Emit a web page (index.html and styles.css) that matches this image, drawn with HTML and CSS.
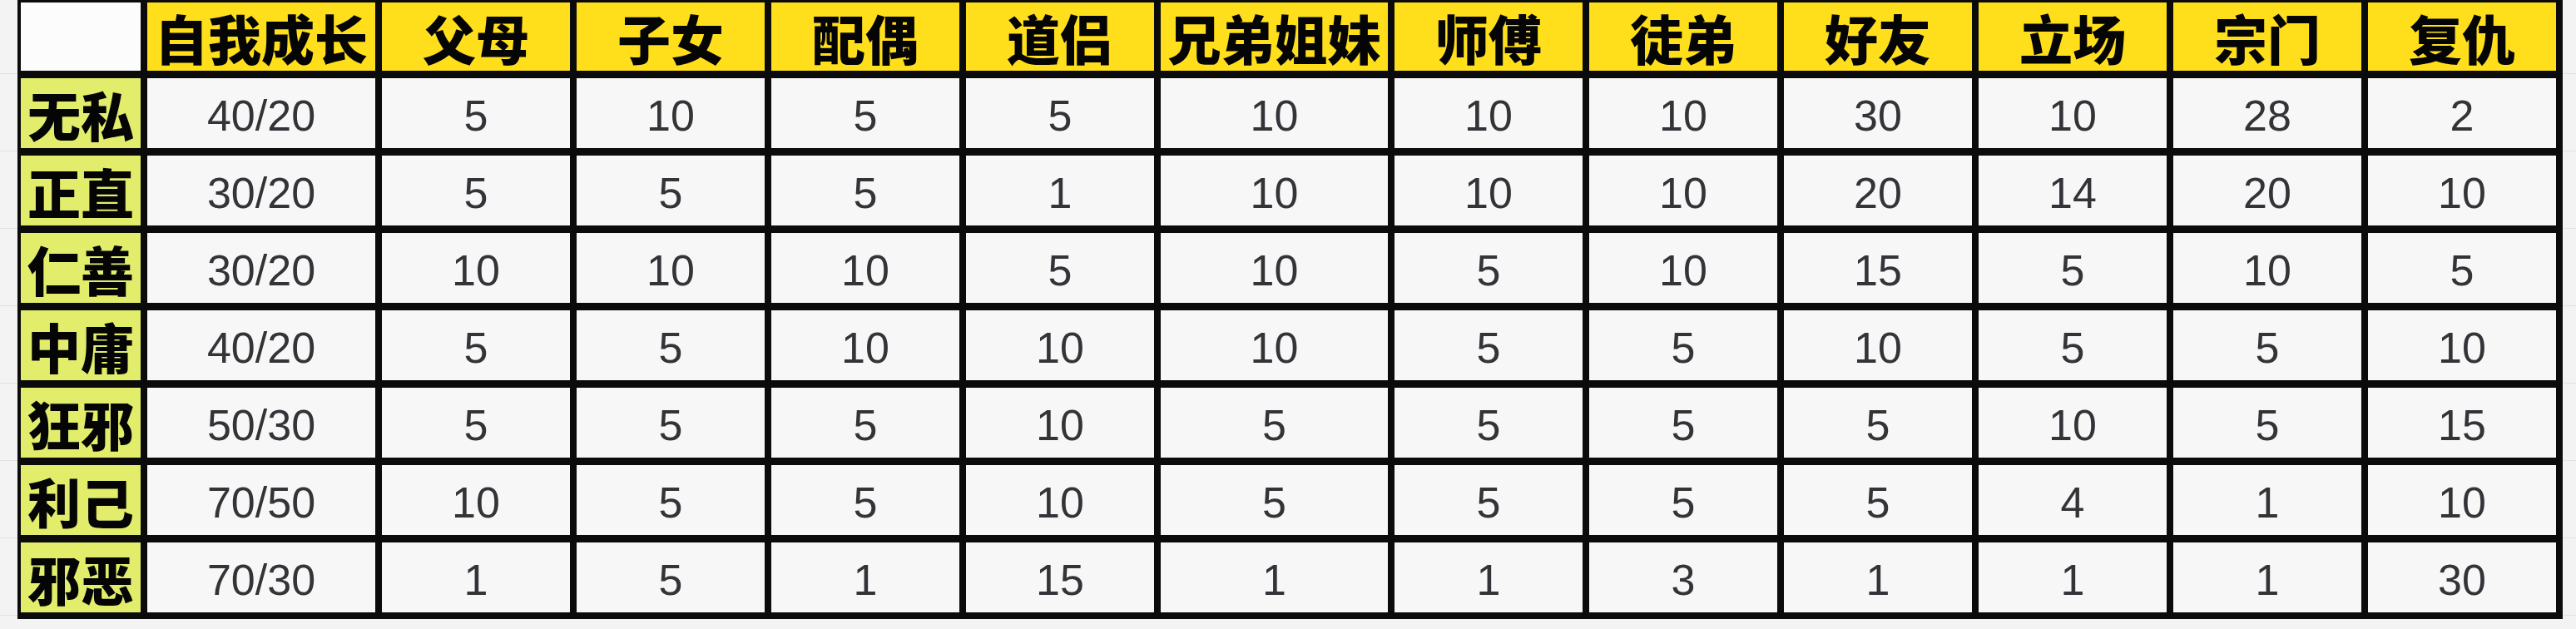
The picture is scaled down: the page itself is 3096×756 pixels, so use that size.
FILE: index.html
```html
<!DOCTYPE html>
<html lang="zh">
<head>
<meta charset="utf-8">
<title>性格关系表</title>
<link rel="stylesheet" href="styles.css">
</head>
<body>
<div class="sheet">
  <div class="corner"></div>
  <div class="col-head">自我成长</div>
  <div class="col-head">父母</div>
  <div class="col-head">子女</div>
  <div class="col-head">配偶</div>
  <div class="col-head">道侣</div>
  <div class="col-head">兄弟姐妹</div>
  <div class="col-head">师傅</div>
  <div class="col-head">徒弟</div>
  <div class="col-head">好友</div>
  <div class="col-head">立场</div>
  <div class="col-head">宗门</div>
  <div class="col-head">复仇</div>

  <div class="row-head">无私</div>
  <div class="cell">40/20</div><div class="cell">5</div><div class="cell">10</div><div class="cell">5</div><div class="cell">5</div><div class="cell">10</div><div class="cell">10</div><div class="cell">10</div><div class="cell">30</div><div class="cell">10</div><div class="cell">28</div><div class="cell">2</div>

  <div class="row-head">正直</div>
  <div class="cell">30/20</div><div class="cell">5</div><div class="cell">5</div><div class="cell">5</div><div class="cell">1</div><div class="cell">10</div><div class="cell">10</div><div class="cell">10</div><div class="cell">20</div><div class="cell">14</div><div class="cell">20</div><div class="cell">10</div>

  <div class="row-head">仁善</div>
  <div class="cell">30/20</div><div class="cell">10</div><div class="cell">10</div><div class="cell">10</div><div class="cell">5</div><div class="cell">10</div><div class="cell">5</div><div class="cell">10</div><div class="cell">15</div><div class="cell">5</div><div class="cell">10</div><div class="cell">5</div>

  <div class="row-head">中庸</div>
  <div class="cell">40/20</div><div class="cell">5</div><div class="cell">5</div><div class="cell">10</div><div class="cell">10</div><div class="cell">10</div><div class="cell">5</div><div class="cell">5</div><div class="cell">10</div><div class="cell">5</div><div class="cell">5</div><div class="cell">10</div>

  <div class="row-head">狂邪</div>
  <div class="cell">50/30</div><div class="cell">5</div><div class="cell">5</div><div class="cell">5</div><div class="cell">10</div><div class="cell">5</div><div class="cell">5</div><div class="cell">5</div><div class="cell">5</div><div class="cell">10</div><div class="cell">5</div><div class="cell">15</div>

  <div class="row-head">利己</div>
  <div class="cell">70/50</div><div class="cell">10</div><div class="cell">5</div><div class="cell">5</div><div class="cell">10</div><div class="cell">5</div><div class="cell">5</div><div class="cell">5</div><div class="cell">5</div><div class="cell">4</div><div class="cell">1</div><div class="cell">10</div>

  <div class="row-head">邪恶</div>
  <div class="cell">70/30</div><div class="cell">1</div><div class="cell">5</div><div class="cell">1</div><div class="cell">15</div><div class="cell">1</div><div class="cell">1</div><div class="cell">3</div><div class="cell">1</div><div class="cell">1</div><div class="cell">1</div><div class="cell">30</div>
</div>
</body>
</html>
```

FILE: styles.css
```css
html, body {
  margin: 0;
  padding: 0;
}

body {
  width: 3096px;
  height: 756px;
  overflow: hidden;
  background-color: #f3f3f3;
  background-image: repeating-linear-gradient(
    to bottom,
    transparent 0px,
    transparent 88px,
    #e2e2e2 88px,
    #e2e2e2 89px,
    transparent 89px,
    transparent 93px
  );
}

.sheet {
  margin-left: 21px;
  width: max-content;
  display: grid;
  grid-template-columns: 144px 274px repeat(4, 226px) 273px repeat(6, 226px);
  grid-template-rows: 82px repeat(7, 84px);
  column-gap: 8px;
  row-gap: 9px;
  padding: 3px 8px 8px 4px;
  background: #0b0b0b;
}

.corner {
  background: #fcfcfc;
}

.col-head,
.row-head {
  display: flex;
  align-items: center;
  justify-content: center;
  font-family: "Noto Sans CJK SC", "Noto Sans", sans-serif;
  font-weight: 900;
  font-size: 64px;
  line-height: 1;
  color: #050505;
  white-space: nowrap;
}

.col-head {
  background: #ffdf1c;
}

.row-head {
  background: #e2ed6c;
}

.cell {
  display: flex;
  align-items: center;
  justify-content: center;
  background: #f7f7f7;
  font-family: "Liberation Sans", Arial, sans-serif;
  font-size: 52px;
  line-height: 1;
  padding-top: 6px;
  box-sizing: border-box;
  color: #333338;
}
```
